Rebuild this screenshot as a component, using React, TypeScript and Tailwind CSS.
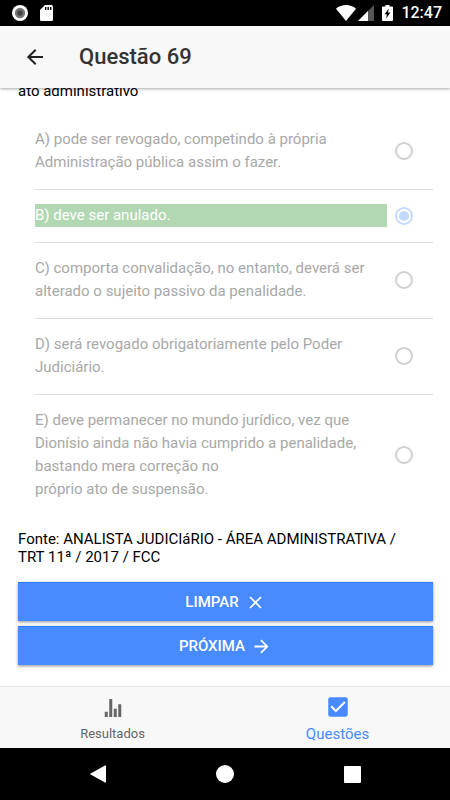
import React from 'react';
import { IoMdArrowBack, IoMdArrowForward, IoMdCheckbox, IoMdClose, IoMdStats } from 'react-icons/io';

const options = [
  { id: 'a', text: 'A) pode ser revogado, competindo à própria Administração pública assim o fazer.' },
  { id: 'b', text: 'B) deve ser anulado.', correct: true },
  { id: 'c', text: 'C) comporta convalidação, no entanto, deverá ser alterado o sujeito passivo da penalidade.' },
  { id: 'd', text: 'D) será revogado obrigatoriamente pelo Poder Judiciário.' },
  {
    id: 'e',
    text: 'E) deve permanecer no mundo jurídico, vez que Dionísio ainda não havia cumprido a penalidade, bastando mera correção no\npróprio ato de suspensão.'
  }
];

const StatusBar: React.FC = () => (
  <div className="flex h-[26px] shrink-0 items-center justify-between bg-black pl-3 pr-2 text-white">
    <div className="flex items-center gap-3">
      <svg className="size-4" viewBox="0 0 16 16">
        <circle cx="8" cy="8" r="8" fill="#fff" />
        <circle cx="8" cy="8" r="5.2" fill="#777" />
        <circle cx="8" cy="8" r="2.8" fill="#444" />
      </svg>
      <svg className="h-4 w-[13px]" viewBox="0 0 13 16">
        <path d="M5 0h6.5A1.5 1.5 0 0 1 13 1.500v13a1.500 1.500 0 0 1-1.500 1.500h-10A1.500 1.500 0 0 1 0 14.500V5z" fill="#fff" />
        <path d="M5 2h1.400v3H5zM7.500 2h1.400v3H7.500zM10 2h1.400v3H10z" fill="#000" />
      </svg>
    </div>
    <div className="flex items-center">
      <svg className="h-4 w-5" viewBox="0 0 20 16">
        <path d="M0 3.800C5.500-1.200 14.500-1.200 20 3.800L10 16z" fill="#fff" />
      </svg>
      <svg className="ml-0.5 size-4" viewBox="0 0 16 16">
        <path d="M16 0v16H0z" fill="#555" />
        <path d="M10 6v10H0z" fill="#fff" />
      </svg>
      <svg className="ml-2 h-4 w-[11px]" viewBox="0 0 11 16">
        <path d="M3.500 0h4v1.400H10a1 1 0 0 1 1 1V15a1 1 0 0 1-1 1H1a1 1 0 0 1-1-1V2.400a1 1 0 0 1 1-1h2.500z" fill="#fff" />
        <path d="M6.800 3.500L2.600 9.200h2.200L4.200 13.500l4.200-6H6z" fill="#000" />
      </svg>
      <span className="ml-2 text-base font-medium leading-4">12:47</span>
    </div>
  </div>
);

const Header: React.FC = () => (
  <header className="z-10 flex h-[62px] shrink-0 items-center gap-8 bg-[#f8f8f8] px-[23px] shadow-[0_1px_3px_rgba(0,0,0,0.35)]">
    <button type="button" aria-label="Voltar" className="text-[#222]">
      <IoMdArrowBack className="size-6" />
    </button>
    <h1 className="text-[22px] font-medium leading-7 text-[#333]">Questão 69</h1>
  </header>
);

const Options: React.FC = () => (
  <fieldset className="mt-[14px] pl-[17px]">
    {options.map((option, index) => (
      <label
        key={option.id}
        htmlFor={option.id}
        className={`flex items-center gap-2 pb-[15px] pr-5 pt-[14px] ${
          index < options.length - 1 ? 'border-b border-[#dedede]' : ''
        }`}
      >
        <span
          className={`flex-1 whitespace-pre-line leading-[23px] ${
            option.correct ? 'bg-[#b2d8b3] text-white' : 'text-[#a8a8a8]'
          }`}
        >
          {option.text}
        </span>
        <input
          id={option.id}
          type="radio"
          name="resposta"
          defaultChecked={option.correct}
          disabled
          className="size-[18px] shrink-0 appearance-none rounded-full border-2 border-[#d0d0d0] bg-clip-content p-[2px] checked:border-[#c4d9ff] checked:bg-[#c4d9ff]"
        />
      </label>
    ))}
  </fieldset>
);

const actionClass =
  'flex h-[39px] w-full items-center justify-center gap-1.5 border-t border-[#2f7dff] bg-[#488aff] text-[15px] font-medium text-white shadow-[0_1px_3px_rgba(0,0,0,0.45)]';

const App: React.FC = () => {
  return (
    <div className="flex min-h-screen flex-col bg-white font-[Roboto,sans-serif] text-[15px]">
      <StatusBar />
      <Header />

      <main className="flex-1 pl-[18px] pr-[17px]">
        {/* last line of the question, scrolled under the header */}
        <div className="flex h-3 items-end overflow-hidden">
          <p className="leading-[18px] text-black">ato administrativo</p>
        </div>

        <Options />

        <p className="mt-[14px] pr-6 leading-[18px] text-black">
          Fonte: ANALISTA JUDICIáRIO - ÁREA ADMINISTRATIVA / TRT 11ª / 2017 / FCC
        </p>

        <div className="mb-5 mt-4 flex flex-col gap-[5px]">
          <button type="button" className={actionClass}>
            LIMPAR
            <IoMdClose className="size-[21px]" />
          </button>
          <button type="button" className={actionClass}>
            PRÓXIMA
            <IoMdArrowForward className="size-[21px]" />
          </button>
        </div>
      </main>

      <nav className="grid h-[62px] shrink-0 grid-cols-2 border-t border-[#e6e6e6] bg-[#f8f8f8]">
        <a href="#resultados" className="flex flex-col items-center justify-center gap-1 pt-1 text-[13px] leading-5 text-[#666]">
          <IoMdStats className="size-6" />
          Resultados
        </a>
        <a href="#questoes" className="flex flex-col items-center justify-center gap-1 pt-0.5 text-[15px] leading-5 text-[#488aff]">
          <IoMdCheckbox className="size-[26px]" />
          Questões
        </a>
      </nav>

      <div className="grid h-[52px] shrink-0 grid-cols-3 place-items-center bg-black px-[34px] text-white">
        <button type="button" aria-label="Voltar">
          <svg className="h-[18px] w-4" viewBox="0 0 16 18" fill="currentColor">
            <path d="M16 1v16q0 1-1 .6L.6 9.600q-.8-.6 0-1.200L15 .4q1-.4 1 .6z" />
          </svg>
        </button>
        <button type="button" aria-label="Início" className="size-[18px] rounded-full bg-white" />
        <button type="button" aria-label="Aplicativos recentes" className="size-[17px] rounded-[1px] bg-white" />
      </div>
    </div>
  );
};

export default App;
